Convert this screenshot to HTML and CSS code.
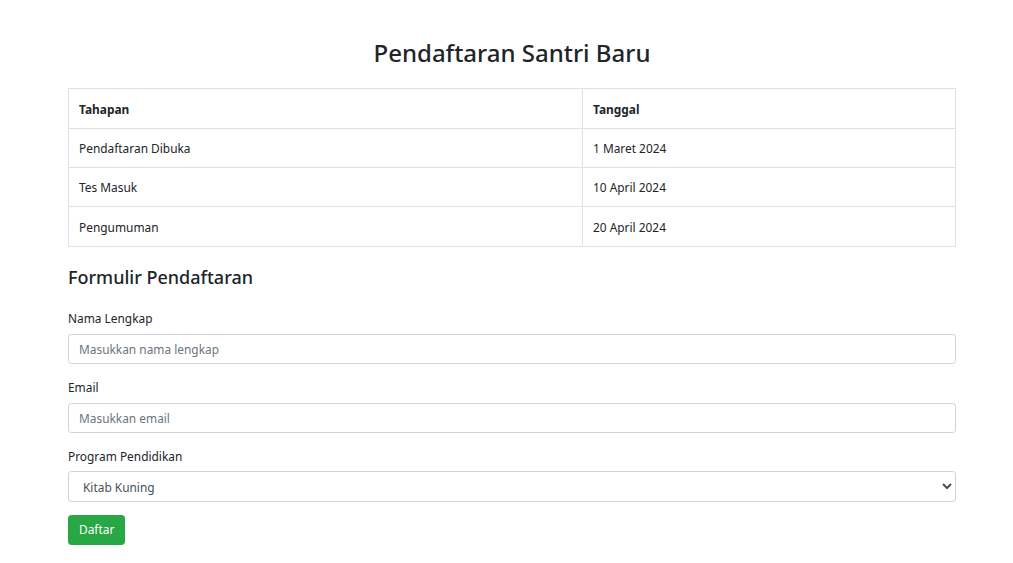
FILE: index.html
```html
<!DOCTYPE html>
<html lang="id">
<head>
<meta charset="utf-8">
<title>Pendaftaran Santri Baru</title>
<link rel="stylesheet" href="styles.css">
</head>
<body>
<div class="container">
  <h2 class="title">Pendaftaran Santri Baru</h2>
  <table class="schedule">
    <colgroup><col class="col-stage"><col class="col-date"></colgroup>
    <thead>
      <tr><th>Tahapan</th><th>Tanggal</th></tr>
    </thead>
    <tbody>
      <tr><td>Pendaftaran Dibuka</td><td>1 Maret 2024</td></tr>
      <tr><td>Tes Masuk</td><td>10 April 2024</td></tr>
      <tr><td>Pengumuman</td><td>20 April 2024</td></tr>
    </tbody>
  </table>
  <h4 class="subtitle">Formulir Pendaftaran</h4>
  <form class="form">
    <div class="form-group">
      <label for="nama">Nama Lengkap</label>
      <input id="nama" class="form-control" type="text" placeholder="Masukkan nama lengkap">
    </div>
    <div class="form-group">
      <label for="email">Email</label>
      <input id="email" class="form-control" type="email" placeholder="Masukkan email">
    </div>
    <div class="form-group">
      <label for="program">Program Pendidikan</label>
      <select id="program" class="form-control select">
        <option>Kitab Kuning</option>
        <option>Tahfidz Quran</option>
      </select>
    </div>
    <button type="button" class="btn">Daftar</button>
  </form>
</div>
</body>
</html>
```
FILE: styles.css
```css
html, body {
  margin: 0;
  padding: 0;
  background: #fff;
}
body {
  font-family: "Noto Sans", "Open Sans", sans-serif;
  font-size: 11.9px;
  line-height: 1.5;
  color: #212529;
}
.container {
  width: 888px;
  margin: 38.4px 0 0 68px;
}
.title {
  margin: 0 0 19.2px;
  font-size: 24px;
  font-weight: 500;
  line-height: 30.7px;
  text-align: center;
}
.schedule {
  width: 100%;
  border-collapse: collapse;
  margin-bottom: 12.8px;
}
.col-stage { width: 514px; }
.schedule th,
.schedule td {
  border: 1px solid #dee2e6;
  padding: 10.4px 10px 8.8px;
  text-align: left;
  vertical-align: top;
  line-height: 19.2px;
}
.schedule th {
  font-weight: 700;
}
.subtitle {
  margin: 19.2px 0 19.2px;
  font-size: 18px;
  font-weight: 500;
  line-height: 23px;
}
.form-group {
  margin-bottom: 12.8px;
}
.form-group label {
  display: block;
  padding-top: 0.8px;
  margin-bottom: 5.6px;
  line-height: 19.2px;
}
.form-control {
  display: block;
  box-sizing: border-box;
  width: 100%;
  height: 30.4px;
  padding: 4.8px 10px;
  font-family: inherit;
  font-size: 11.9px;
  line-height: 19.2px;
  color: #495057;
  background: #fff;
  border: 1px solid #ced4da;
  border-radius: 3.2px;
  margin: 0;
}
.form-control::placeholder {
  color: #6c757d;
  opacity: 1;
}
.btn {
  display: inline-block;
  height: 30.4px;
  padding: 4.8px 10px;
  font-family: inherit;
  font-size: 11.9px;
  line-height: 19.2px;
  color: #fff;
  background: #28a745;
  border: 1px solid #28a745;
  border-radius: 3.2px;
  cursor: pointer;
}
```
